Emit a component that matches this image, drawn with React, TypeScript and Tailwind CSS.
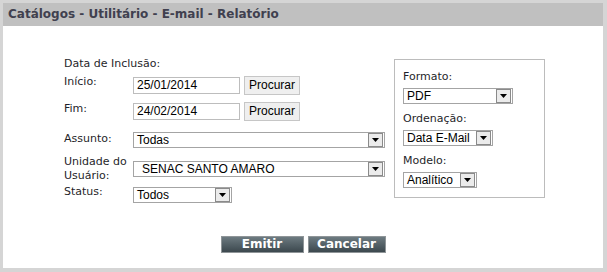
const label = "font-['DejaVu_Sans',sans-serif] text-[11px] leading-[14px] text-[#1f1f2a]";
const field = "font-['Liberation_Sans',Arial,sans-serif] text-[12px] text-black";

function Arrow() {
  return (
    <div className="w-[15px] h-[14px] shrink-0 border border-[#8a8a8a] bg-[#ebebeb] flex items-center justify-center">
      <svg width="7" height="4" viewBox="0 0 7 4">
        <path d="M0 0H7L3.5 4Z" fill="#000" />
      </svg>
    </div>
  );
}

function Select({ value, width, indent = 'pl-[3px]' }: { value: string; width: string; indent?: string }) {
  return (
    <div className={`${width} h-[16px] border border-[#a4a4a4] bg-white flex items-center pr-[1px]`}>
      <span className={`flex-1 ${indent} ${field} leading-[14px] whitespace-nowrap overflow-hidden`}>{value}</span>
      <Arrow />
    </div>
  );
}

function DateRow({ name, value, top }: { name: string; value: string; top: string }) {
  return (
    <div className={`flex items-start ${top}`}>
      <span className={`${label} w-[69px]`}>{name}</span>
      <div className={`mt-[1px] w-[107px] h-[17px] border border-[#bdbdbd] bg-white pl-[3px] ${field} leading-[15px]`}>
        {value}
      </div>
      <button className={`ml-[4px] w-[56px] h-[19px] border border-[#c6c6c6] bg-[#efefef] ${field} leading-[17px]`}>
        Procurar
      </button>
    </div>
  );
}

export default function App() {
  return (
    <div className="w-[607px] h-[272px] bg-[#d5d5d5] pt-[3px] pl-[3px] pr-[4px] pb-[4px] flex flex-col">
      <div className="h-[23px] bg-[#c0c0c0] pl-[5px] pt-[4px] font-['DejaVu_Sans',sans-serif] font-bold text-[12px] leading-[15px] text-[#40404f]">
        Catálogos - Utilitário - E-mail - Relatório
      </div>
      <div className="flex-1 bg-white flex flex-col">
        <div className="flex items-start pl-[61px] pt-[31px]">
          <div className="w-[321px] flex flex-col">
            <span className={label}>Data de Inclusão:</span>
            <DateRow name="Início:" value="25/01/2014" top="mt-[5px] [&>span]:-mt-[1px]" />
            <DateRow name="Fim:" value="24/02/2014" top="mt-[7px]" />
            <div className="flex items-start mt-[11px]">
              <span className={`${label} w-[69px]`}>Assunto:</span>
              <Select value="Todas" width="w-[252px]" />
            </div>
            <div className="flex items-start mt-[7px]">
              <span className={`${label} w-[69px] leading-[12px]`}>
                Unidade do
                <br />
                Usuário:
              </span>
              <div className="mt-[6px]">
                <Select value="SENAC SANTO AMARO" width="w-[252px]" indent="pl-[8px]" />
              </div>
            </div>
            <div className="flex items-start mt-[2px]">
              <span className={`${label} w-[69px]`}>Status:</span>
              <div className="mt-[2px]">
                <Select value="Todos" width="w-[99px]" />
              </div>
            </div>
          </div>
          <div className="ml-[9px] mt-[2px] w-[151px] h-[139px] border border-[#bcbcbc] pt-[10px] pl-[8px] flex flex-col">
            <span className={label}>Formato:</span>
            <div className="mt-[4px]">
              <Select value="PDF" width="w-[110px]" />
            </div>
            <span className={`${label} mt-[8px]`}>Ordenação:</span>
            <div className="mt-[4px]">
              <Select value="Data E-Mail" width="w-[90px]" />
            </div>
            <span className={`${label} mt-[8px]`}>Modelo:</span>
            <div className="mt-[4px]">
              <Select value="Analítico" width="w-[74px]" />
            </div>
          </div>
        </div>
        <div className="flex justify-center gap-[4px] mt-[33px]">
          {['Emitir', 'Cancelar'].map((t, i) => (
            <button
              key={t}
              className={`${i === 0 ? 'w-[83px]' : 'w-[78px]'} h-[17px] border border-[#8f9598] bg-gradient-to-b from-[#6d7b81] to-[#3c484e] text-white font-['DejaVu_Sans',sans-serif] font-bold text-[12px] leading-[15px]`}
            >
              {t}
            </button>
          ))}
        </div>
      </div>
    </div>
  );
}
